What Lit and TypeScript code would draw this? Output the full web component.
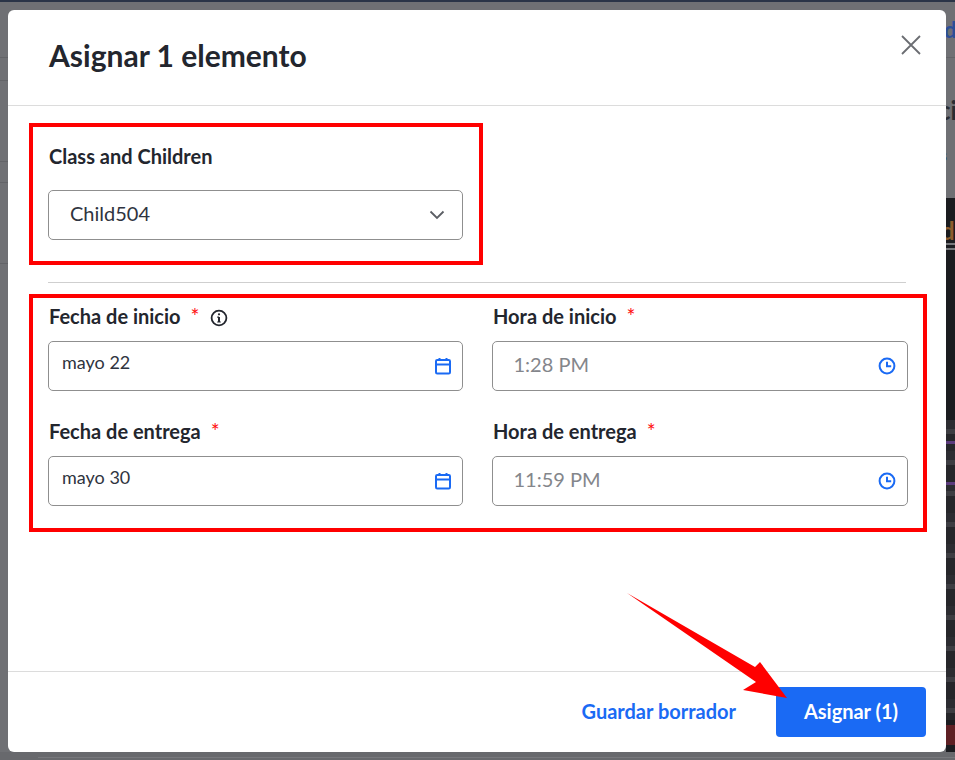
import { LitElement, html, css, svg } from "lit";
import { customElement } from "lit/decorators.js";

const calendar = html`<svg class="ico" width="18" height="18" viewBox="0 0 18 18" fill="none" stroke="#1a6af4" stroke-width="2"><rect x="2" y="3" width="14" height="13.4" rx="1.2"/><path d="M2 7.4h14M5.5 1v2.5M12.5 1v2.5"/></svg>`;
const clock = html`<svg class="ico" width="18" height="18" viewBox="0 0 18 18" fill="none" stroke="#1a6af4" stroke-width="2"><circle cx="9" cy="9" r="7.4"/><path d="M9 4.8v4.4h4.2"/></svg>`;

@customElement("app-root")
export class AppRoot extends LitElement {
  static styles = css`
    :host {
      display: block;
      position: relative;
      width: 955px;
      height: 760px;
      overflow: hidden;
      background: #6f7074;
      font-family: Lato, "Liberation Sans", sans-serif;
      color: #23262e;
    }
    .topbar { position: absolute; left: 0; right: 0; top: 0; height: 2px; background: #2a3447; }
    .bg-dark { position: absolute; left: 946px; right: 0; top: 198px; height: 554px; background: #1b1c20; }
    .bg-tex {
      position: absolute; left: 946px; right: 0; top: 420px; height: 300px;
      background: repeating-linear-gradient(180deg, #2c2c31 0 9px, #3d3d42 9px 14px, #26262a 14px 31px);
    }
    .bg-purple { position: absolute; left: 946px; right: 0; height: 3px; background: #5b3b7c; }
    .p1 { top: 441px; }
    .p2 { top: 482px; }
    .bg-red { position: absolute; left: 946px; right: 0; top: 725px; height: 20px; background: #5e2024; }
    .bg-lines { position: absolute; left: 946px; right: 0; top: 243px; height: 7px; border-top: 2px solid #77787c; border-bottom: 2px solid #77787c; box-sizing: border-box; }
    .bg-rule { position: absolute; height: 1px; background: #626367; }
    .r0 { left: 946px; right: 0; top: 57px; }
    .r1 { left: 0; width: 8px; top: 57px; }
    .r2 { left: 0; width: 8px; top: 80px; }
    .r3 { left: 0; width: 8px; top: 161px; }
    .r4 { left: 0; width: 8px; top: 182px; }
    .r5 { left: 0; width: 8px; top: 263px; }
    .bg-foot { position: absolute; left: 0; right: 0; bottom: 0; height: 8px; background: #68696d; }
    .bg-foot-line { position: absolute; left: 38px; right: 0; bottom: 2px; height: 1px; background: #77787c; }
    .peek { position: absolute; left: 946px; font-weight: 700; font-size: 22px; line-height: 24px; white-space: nowrap; }
    .p-de { top: 18px; left: 944px; color: #2c4e98; }
    .p-ci { top: 98px; left: 938px; font-size: 26px; color: #2a2c33; }
    .p-s { top: 143px; left: 940px; font-size: 16px; color: #2c4e98; }
    .p-d { top: 219px; left: 941px; font-size: 24px; color: #8c5c2c; }
    .modal {
      position: absolute;
      left: 8px;
      top: 10px;
      width: 938px;
      height: 742px;
      background: #fff;
      border-radius: 6px;
      display: flex;
      flex-direction: column;
    }
    .head {
      height: 96px;
      box-sizing: border-box;
      border-bottom: 1px solid #dcdcdc;
      display: flex;
      align-items: center;
      justify-content: space-between;
      padding: 0 24px 0 41px;
      flex: none;
    }
    h1 { margin: 0 0 5px; font-size: 30px; line-height: 36px; font-weight: 700; color: #23262e; }
    .close { margin-bottom: 26px; display: block; }
    .body { flex: 1; padding: 17px 19px 0 21px; display: flex; flex-direction: column; min-height: 0; }
    .mark { border: 4px solid #ff0000; box-sizing: border-box; }
    .mark1 { width: 454px; height: 142px; padding: 15px 16px 0 15px; }
    .divider { height: 1px; background: #cfcfcf; margin: 17px 0 11px 19px; width: 858px; }
    .mark2 {
      width: 898px;
      height: 238px;
      padding: 7px 15px 0 15px;
      display: grid;
      grid-template-columns: 415px 416px;
      column-gap: 29px;
      row-gap: 29px;
      align-content: start;
    }
    .label {
      display: flex;
      align-items: center;
      box-sizing: border-box;
      height: 24px;
      font-size: 20px;
      font-weight: 700;
      color: #23262e;
      padding: 0 0 2px 1px;
      margin-bottom: 12px;
    }
    .req { color: #f11; font-size: 21px; font-weight: 400; margin-left: 10px; line-height: 20px; }
    .info { margin-left: 10px; margin-top: 3px; }
    .mark1 .label { margin-bottom: 20px; height: 28px; padding-bottom: 0; }
    .field {
      box-sizing: border-box;
      height: 50px;
      border: 1px solid #8f8f8f;
      border-radius: 5px;
      display: flex;
      align-items: center;
      justify-content: space-between;
      background: #fff;
    }
    .sel { padding: 0 17px 0 21px; font-size: 20px; color: #2f3440; }
    .sel span { margin-bottom: 5px; }
    .date { padding: 0 10px 0 13px; font-size: 18px; color: #2f3440; }
    .date span { margin-bottom: 9px; }
    .time { padding: 0 11px 0 20.5px; font-size: 20px; color: #84868b; }
    .time span { margin-bottom: 5px; }
    .ico { margin-top: -1px; display: block; }
    .foot {
      height: 81px;
      box-sizing: border-box;
      border-top: 1px solid #dcdcdc;
      display: flex;
      align-items: center;
      justify-content: flex-end;
      gap: 40px;
      padding: 0 20px 0 0;
      flex: none;
    }
    .link { font-size: 20px; font-weight: 700; color: #1a6af4; margin-bottom: 3px; }
    .btn {
      width: 150px;
      height: 50px;
      border-radius: 4px;
      background: #1a6af4;
      color: #fff;
      font-size: 20px;
      font-weight: 700;
      display: flex;
      align-items: center;
      justify-content: center;
      padding-bottom: 3px;
      box-sizing: border-box;
    }
    .arrow { position: absolute; left: 0; top: 0; pointer-events: none; }
  `;

  private field(kind: string, value: string, icon: unknown) {
    return html`<div class="field ${kind}"><span>${value}</span>${icon}</div>`;
  }

  render() {
    return html`
      <div class="topbar"></div>
      <div class="bg-rule r0"></div>
      <div class="bg-rule r1"></div>
      <div class="bg-rule r2"></div>
      <div class="bg-rule r3"></div>
      <div class="bg-rule r4"></div>
      <div class="bg-rule r5"></div>
      <div class="peek p-de">de</div>
      <div class="peek p-ci">ci</div>
      <div class="peek p-s">s</div>
      <div class="bg-dark"></div>
      <div class="peek p-d">d</div>
      <div class="bg-lines"></div>
      <div class="bg-tex"></div>
      <div class="bg-purple p1"></div>
      <div class="bg-purple p2"></div>
      <div class="bg-red"></div>
      <div class="bg-foot"></div>
      <div class="bg-foot-line"></div>
      <div class="modal">
        <div class="head">
          <h1>Asignar 1 elemento</h1>
          <svg class="close" width="22" height="22" viewBox="0 0 22 22" fill="none" stroke="#6b6d72" stroke-width="1.8"><path d="M2 2l18 18M20 2L2 20"/></svg>
        </div>
        <div class="body">
          <div class="mark mark1">
            <div class="label">Class and Children</div>
            <div class="field sel">
              <span>Child504</span>
              <svg width="16" height="10" viewBox="0 0 16 10" fill="none" stroke="#5b5e64" stroke-width="1.8"><path d="M1.5 1.5L8 8l6.5-6.5"/></svg>
            </div>
          </div>
          <div class="divider"></div>
          <div class="mark mark2">
            <div>
              <div class="label">Fecha de inicio<span class="req">*</span>
                <svg class="info" width="18" height="18" viewBox="0 0 18 18" fill="none" stroke="#23262e"><circle cx="9" cy="9" r="7.4" stroke-width="1.8"/><path d="M9 8v5" stroke-width="2"/><path d="M7.2 8.2H9M7.2 13h3.6" stroke-width="1.2"/><circle cx="9" cy="5.3" r="1.1" fill="#23262e" stroke="none"/></svg>
              </div>
              ${this.field("date", "mayo 22", calendar)}
            </div>
            <div>
              <div class="label">Hora de inicio<span class="req">*</span></div>
              ${this.field("time", "1:28 PM", clock)}
            </div>
            <div>
              <div class="label">Fecha de entrega<span class="req">*</span></div>
              ${this.field("date", "mayo 30", calendar)}
            </div>
            <div>
              <div class="label">Hora de entrega<span class="req">*</span></div>
              ${this.field("time", "11:59 PM", clock)}
            </div>
          </div>
        </div>
        <div class="foot">
          <div class="link">Guardar borrador</div>
          <div class="btn">Asignar (1)</div>
        </div>
      </div>
      <svg class="arrow" width="955" height="760" viewBox="0 0 955 760">
        ${svg`<polygon points="627,593 755,667 760,662 787,698 743,690 756,682" fill="#ff0000"/>`}
      </svg>
    `;
  }
}
